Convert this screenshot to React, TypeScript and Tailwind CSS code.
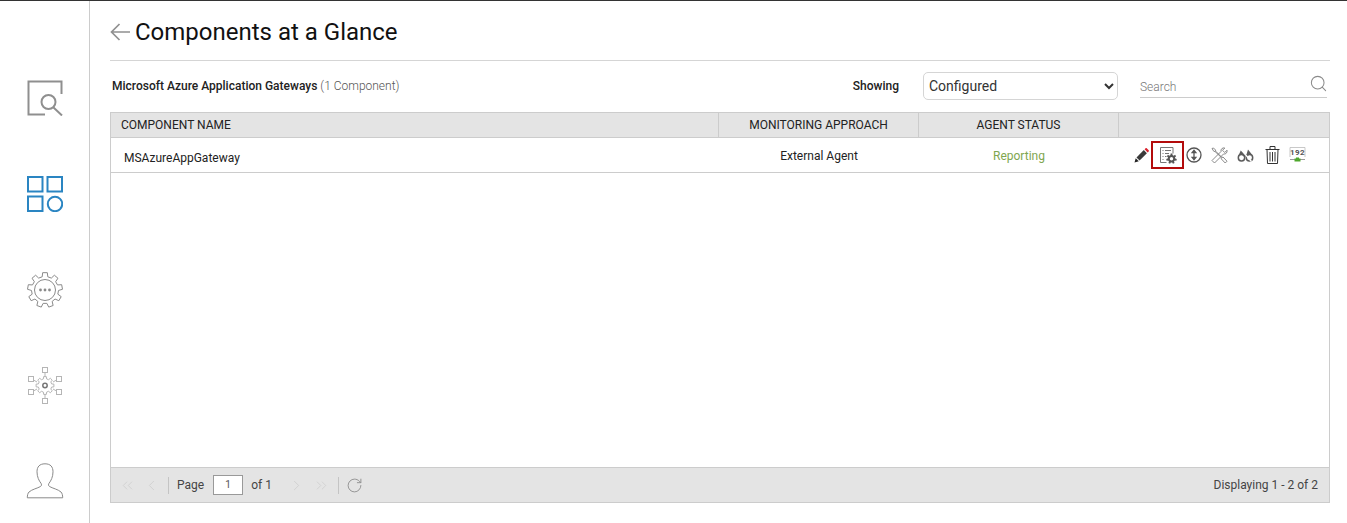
import React from 'react';
import { ChevronLeft, ChevronRight, ChevronsLeft, ChevronsRight, RotateCw, Search } from 'lucide-react';

const SearchSquareIcon = () => (
  <svg width="36" height="36" viewBox="0 0 36 36" fill="none" stroke="#8f8f8f" strokeWidth="2">
    <path d="M34.500 14V1.500H1.500V34.500H18" />
    <circle cx="21.500" cy="22" r="7" />
    <path d="M26.500 27.500L35 35.500" />
  </svg>
);

const ComponentsIcon = () => (
  <svg width="36" height="36" viewBox="0 0 36 36" fill="none" stroke="#2a85c2" strokeWidth="2">
    <rect x="1" y="1" width="14.500" height="14.500" />
    <rect x="20.500" y="1" width="14.500" height="14.500" />
    <rect x="1" y="20.500" width="14.500" height="14.500" />
    <circle cx="28" cy="28" r="7.200" />
  </svg>
);

// Cog outline with square teeth, used by the nav icons
const gearOutline = (cx: number, cy: number, outer: number, inner: number, teeth: number) => {
  const points: string[] = [];
  const step = (Math.PI * 2) / teeth;
  for (let i = 0; i < teeth; i++) {
    const a = i * step - Math.PI / 2;
    const spread = step * 0.24;
    [
      [inner, a - spread * 1.250],
      [outer, a - spread * 0.800],
      [outer, a + spread * 0.800],
      [inner, a + spread * 1.250],
    ].forEach(([r, t]) => points.push(`${(cx + r * Math.cos(t)).toFixed(2)} ${(cy + r * Math.sin(t)).toFixed(2)}`));
  }
  return `M${points.join('L')}Z`;
};

const GearDotsIcon = () => (
  <svg width="36" height="36" viewBox="0 0 36 36" fill="none" stroke="#8a8a8a" strokeWidth="1">
    <path d={gearOutline(18, 18, 17.500, 13.500, 9)} />
    <circle cx="18" cy="18" r="10.500" />
    <circle cx="13.500" cy="18" r="1.400" fill="#8a8a8a" stroke="none" />
    <circle cx="18" cy="18" r="1.400" fill="#8a8a8a" stroke="none" />
    <circle cx="22.500" cy="18" r="1.400" fill="#8a8a8a" stroke="none" />
  </svg>
);

const NetworkGearIcon = () => (
  <svg width="36" height="37" viewBox="0 0 36 37" fill="none" stroke="#b5b5b5" strokeWidth="1">
    <rect x="15.500" y="0.500" width="5" height="5" />
    <rect x="15.500" y="31.500" width="5" height="5" />
    <rect x="1.500" y="9.500" width="5" height="5" />
    <rect x="29.500" y="9.500" width="5" height="5" />
    <rect x="1.500" y="22.500" width="5" height="5" />
    <rect x="29.500" y="22.500" width="5" height="5" />
    <path d="M18 6v4M18 27v4M6.500 13l3.500 2M29.500 13l-3.500 2M6.500 24l3.500-2M29.500 24l-3.500-2" />
    <path d={gearOutline(18, 18.500, 9, 6.800, 8)} />
    <circle cx="18" cy="18.500" r="2.200" stroke="#777" strokeWidth="1.500" />
  </svg>
);

const UserIcon = () => (
  <svg width="38" height="36" viewBox="0 0 38 36" fill="none" stroke="#8a8a8a" strokeWidth="1">
    <path d="M19 .8c-5.500 0-8 3-8 8 0 5 2 9 4 11.500.8 1 .6 2.500-.5 3.200-3 1.800-8.500 2.800-11.500 5.500-1.200 1.200-1.700 3.500-1.700 5.800h35.400c0-2.300-.5-4.600-1.700-5.800-3-2.700-8.500-3.700-11.500-5.500-1.100-.7-1.300-2.200-.5-3.200 2-2.500 4-6.500 4-11.500 0-5-2.500-8-8-8z" />
  </svg>
);

const BackArrow = () => (
  <svg width="20" height="18" viewBox="0 0 20 18" fill="none" stroke="#909090" strokeWidth="1.700">
    <path d="M20 9H1.500M9.500 1L1.500 9l8 8" />
  </svg>
);

const PencilIcon = () => (
  <svg width="15" height="15" viewBox="0 0 15 15">
    <path d="M.5 14.500l1.200-4.300 3.100 3.100z" fill="#222" />
    <path d="M2.500 9.400L9.800 2.100l3.100 3.100-7.300 7.300z" fill="#3a3a3a" />
    <path d="M10.600 1.300l1-1c.4-.3.800-.3 1.100 0l2 2c.3.300.3.700 0 1.100l-1 1z" fill="#d9202c" />
  </svg>
);

const ConfigIcon = () => (
  <svg width="18" height="18" viewBox="0 0 18 18" fill="none" stroke="#777" strokeWidth="1">
    <path d="M7.500 16.500H1.500V1.500h12.500v6" />
    <path d="M3.500 4.500h1M6 4.500h6M3.500 7.500h1M6 7.500h4M3.500 10.500h1M6 10.500h1.500M3.500 13.500h1" />
    <path d={gearOutline(12.500, 12.700, 5.300, 3.800, 7)} fill="#555" stroke="none" />
    <circle cx="12.500" cy="12.700" r="1.700" fill="#fff" stroke="none" />
  </svg>
);

const UpDownIcon = () => (
  <svg width="16" height="16" viewBox="0 0 16 16" fill="none" stroke="#555" strokeWidth="1.300">
    <circle cx="8" cy="8" r="7" />
    <path d="M8 2.300L4.800 6.200h6.400zM8 13.700L4.800 9.800h6.400z" fill="#555" stroke="none" />
    <path d="M8 5v6" />
  </svg>
);

const ToolsIcon = () => (
  <svg width="17" height="17" viewBox="0 0 17 17" fill="none" stroke="#7d7d7d" strokeWidth=".9">
    <path d="M1 1.500l1.500-.5 2 2 .2 1.200 6.300 6.300 1-.5 4 4.200-1.800 1.800-4-4.200.5-1L4 4.500 2.800 4.300z" />
    <path d="M16 3.200l-2.300 2.300-2.200-2.200L13.800 1C11.500.3 9.500 2.200 10 4.500L1 13.500 3.500 16l9-9c2.300.5 4-1.500 3.500-3.800z" />
  </svg>
);

const HideIcon = () => (
  <svg width="17" height="15" viewBox="0 0 17 15">
    <circle cx="4.500" cy="9.800" r="3.200" fill="none" stroke="#5c5c5c" strokeWidth="1.500" />
    <circle cx="12.500" cy="9.800" r="3.200" fill="none" stroke="#5c5c5c" strokeWidth="1.500" />
    <path d="M1 8.500l3-6.500 4 4.500h1.500L11 1.500 16.200 8l-3.200-2-3 2.500H7L4 6z" fill="#5c5c5c" />
    <path d="M3 .5l11.500 13" stroke="#fff" strokeWidth="1.300" />
  </svg>
);

const TrashIcon = () => (
  <svg width="15" height="18" viewBox="0 0 15 18" fill="none" stroke="#333" strokeWidth="1">
    <path d="M.5 3.500h14M5 3.500v-3h5v3M2 3.500l.5 14h10l.5-14M5 6v9.500M7.500 6v9.500M10 6v9.500" />
  </svg>
);

const IpIcon = () => (
  <svg width="17" height="16" viewBox="0 0 17 16" fill="none">
    <path d="M1 10V.5h15V10" stroke="#bbb" strokeWidth=".8" />
    <text x="8.500" y="8" textAnchor="middle" fontSize="8" fontWeight="700" letterSpacing=".4" fontFamily="Roboto, sans-serif" fill="#555">192</text>
    <path d="M1 12.500h15" stroke="#999" />
    <path d="M7 10.500h3v1h1.500v3h-6v-3H7z" fill="#4ea72c" />
  </svg>
);

const Divider = () => <span className="mx-2 h-[17px] w-px bg-[#c4c4c4]" />;

export default function App() {
  return (
    <div className="flex h-[523px] w-[1347px] overflow-hidden border-t border-[#333] bg-white font-['Roboto',sans-serif] text-[#222]">
      {/* Side nav */}
      <aside className="flex w-[90px] shrink-0 flex-col items-center border-r border-[#ccc] pt-[79px]">
        <div className="ml-[1px]"><SearchSquareIcon /></div>
        <div className="ml-[1px] mt-[60px]"><ComponentsIcon /></div>
        <div className="ml-[1px] mt-[60px]"><GearDotsIcon /></div>
        <div className="ml-[1px] mt-[59px]"><NetworkGearIcon /></div>
        <div className="mt-[59px]"><UserIcon /></div>
      </aside>

      <main className="ml-5 flex w-[1220px] flex-col">
        <div className="flex h-[60px] items-center border-b border-[#d5d5d5] pt-[3px]">
          <BackArrow />
          <h1 className="ml-[5px] text-2xl font-normal text-[#111]">Components at a Glance</h1>
        </div>

        <div className="flex h-[51px] items-center">
          <p className="mb-[2px] ml-[2px] text-xs font-medium text-[#222]">
            Microsoft Azure Application Gateways <span className="font-light text-[#555]">(1 Component)</span>
          </p>
          <span className="mb-[2px] ml-auto text-xs font-medium">Showing</span>
          <select defaultValue="Configured" className="mb-[2px] ml-6 h-[28px] w-[195px] rounded-[5px] border border-[#d5d5d5] bg-white pl-[1px] text-sm text-[#333]">
            <option>Configured</option>
          </select>
          <div className="mb-[2px] ml-[22px] mr-[3px] flex h-[25px] w-[187px] items-start border-b border-[#ccc]">
            <span className="mt-[6px] text-xs font-light text-[#777]">Search</span>
            <Search className="ml-auto mt-[1px] mr-[-1px] text-[#8a8a8a]" size={19} strokeWidth={1.300} />
          </div>
        </div>

        {/* Grid */}
        <div className="flex h-[391px] w-full flex-col border border-[#ccc]">
          <div className="flex h-[25px] shrink-0 items-center border-b border-[#ccc] bg-[#e4e4e4] text-xs font-normal text-[#222]">
            <div className="flex h-full w-[608px] items-center border-r border-[#ccc] pl-[10px]">COMPONENT NAME</div>
            <div className="flex h-full w-[200px] items-center justify-center border-r border-[#ccc]">MONITORING APPROACH</div>
            <div className="flex h-full w-[200px] items-center justify-center border-r border-[#ccc]">AGENT STATUS</div>
          </div>

          <div className="flex h-[35px] shrink-0 items-center border-b border-[#ccc] text-xs">
            <div className="w-[608px] pl-[13px] pt-[5px]">MSAzureAppGateway</div>
            <div className="w-[200px] pt-[1px] text-center">External Agent</div>
            <div className="w-[200px] pt-[1px] text-center text-[#7fa650]">Reporting</div>
            <div className="ml-[15px] flex items-center">
              <PencilIcon />
              <div className="ml-[2px] flex h-[28px] w-[33px] items-center justify-center border-2 border-[#b30b0b]"><ConfigIcon /></div>
              <div className="ml-[2px]"><UpDownIcon /></div>
              <div className="ml-[9px]"><ToolsIcon /></div>
              <div className="ml-[9px]"><HideIcon /></div>
              <div className="ml-[11px]"><TrashIcon /></div>
              <div className="ml-[9px]"><IpIcon /></div>
            </div>
          </div>

          <div className="flex-1" />

          <div className="flex h-[35px] shrink-0 items-center border-t border-[#ccc] bg-[#e4e4e4] pl-[8px] pr-[11px] text-xs text-[#444]">
            <ChevronsLeft className="text-[#cacaca]" size={17} strokeWidth={1} />
            <ChevronLeft className="ml-[7px] text-[#cacaca]" size={17} strokeWidth={1} />
            <Divider />
            <span>Page</span>
            <span className="ml-[9px] mr-[8px] flex h-[20px] w-[30px] items-center justify-center border border-[#999] bg-white text-[10px] text-[#555]">1</span>
            <span>of 1</span>
            <span className="ml-[1px]"><Divider /></span>
            <ChevronRight className="ml-[-1px] text-[#cacaca]" size={17} strokeWidth={1} />
            <ChevronsRight className="ml-[8px] text-[#cacaca]" size={17} strokeWidth={1} />
            <Divider />
            <RotateCw className="ml-[-1px] text-[#8f8f8f]" size={17} strokeWidth={1.300} />
            <span className="ml-auto">Displaying 1 - 2 of 2</span>
          </div>
        </div>
      </main>
    </div>
  );
}
